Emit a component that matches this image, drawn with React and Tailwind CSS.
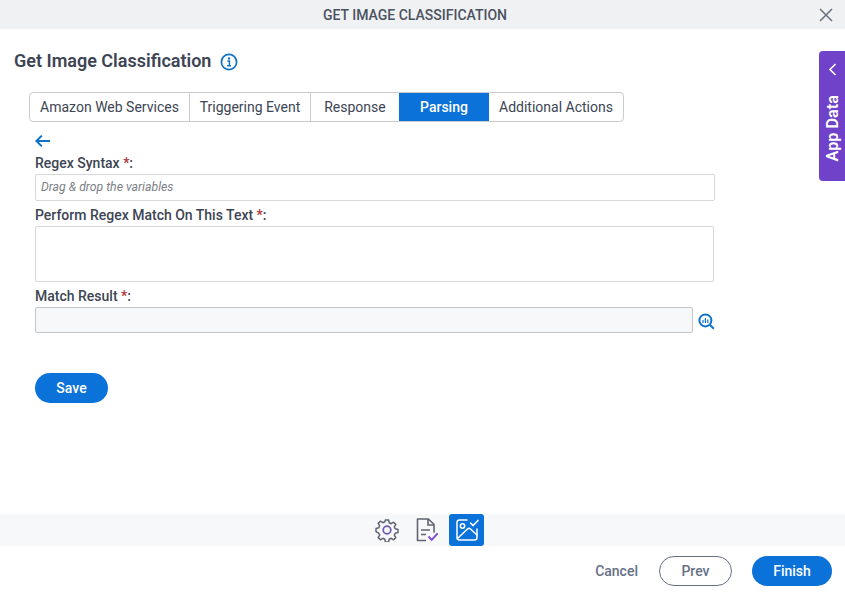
import React from "react";

const Star = () => <span className="text-[#b3343a]">*</span>;

export default function App() {
  return (
    <div className="relative flex h-[593px] w-[845px] flex-col overflow-hidden bg-white font-['Roboto',sans-serif] text-[#3d4554]">
      <header className="relative flex h-[29px] shrink-0 items-center justify-center bg-[#f0f1f3] pt-px text-[14px] font-medium text-[#4a5160]">
        <span className="-ml-[15px]">GET IMAGE CLASSIFICATION</span>
        <button className="absolute right-[12px] top-[8px] text-[#6b7280]">
          <svg width="14" height="14" viewBox="0 0 14 14" fill="none" stroke="currentColor" strokeWidth="1.6" className="block">
            <path d="M1 1l12 12M13 1L1 13" />
          </svg>
        </button>
      </header>

      <main className="min-h-0 flex-1">
        <div className="mt-[22px] flex h-[20px] items-center gap-[9px] pl-[14px]">
          <h1 className="text-[18px] font-semibold leading-[20px] text-[#3d4554]">Get Image Classification</h1>
          <svg width="18" height="18" viewBox="0 0 18 18" fill="none" className="mt-[1px]">
            <circle cx="9" cy="9" r="7.6" stroke="#0f72c9" strokeWidth="1.7" />
            <circle cx="9" cy="5.4" r="1.2" fill="#0f72c9" />
            <path d="M7.4 8h2v4.6M7.2 12.8h3.8" stroke="#0f72c9" strokeWidth="1.5" />
          </svg>
        </div>

        <div className="ml-[29px] mt-[21px] flex h-[30px] w-[595px] overflow-hidden rounded-[4px] border border-[#c9cbcf] text-[14px]">
          <div className="flex w-[160px] items-center justify-center border-r border-[#c9cbcf]">Amazon Web Services</div>
          <div className="flex w-[121px] items-center justify-center border-r border-[#c9cbcf]">Triggering Event</div>
          <div className="flex w-[88px] items-center justify-center">Response</div>
          <div className="-my-px flex w-[90px] items-center justify-center bg-[#0b72d9] font-medium text-white">Parsing</div>
          <div className="flex flex-1 items-center justify-center">Additional Actions</div>
        </div>

        <div className="ml-[35px] w-[680px]">
          <svg width="16" height="14" viewBox="0 0 16 14" fill="none" stroke="#0f72c9" strokeWidth="2" className="mt-[12px] block">
            <path d="M15 7H1.5M6.8 1.6L1.4 7l5.4 5.4" />
          </svg>
          <label className="mt-[7px] block text-[14px] font-medium leading-[16px]">Regex Syntax <Star />:</label>
          <div className="mt-[3px] flex h-[27px] w-[680px] items-center rounded-[2px] border border-[#d6d7da] pb-[1px] pl-[5px] text-[12.25px] italic text-[#7b7f87]">
            Drag &amp; drop the variables
          </div>
          <label className="mt-[6px] block text-[14px] font-medium leading-[16px]">Perform Regex Match On This Text <Star />:</label>
          <div className="mt-[3px] h-[56px] w-[679px] rounded-[2px] border border-[#d6d7da]" />
          <label className="mt-[6px] block text-[14px] font-medium leading-[16px]">Match Result <Star />:</label>
          <div className="mt-[3px] flex items-center gap-[5px]">
            <div className="h-[26px] w-[658px] rounded-[2px] border border-[#c4c5c8] bg-[#f7f8fa]" />
            <svg width="17" height="17" viewBox="0 0 17 17" fill="none" className="mt-[2px]">
              <circle cx="7.4" cy="7.4" r="6" stroke="#0f72c9" strokeWidth="2" />
              <path d="M11.8 11.8l4 4" stroke="#0f72c9" strokeWidth="2" />
              <path d="M5 10V7M7.4 10V5M9.8 10V6.4" stroke="#0f72c9" strokeWidth="1.2" />
            </svg>
          </div>
          <button className="mt-[40px] block h-[30px] w-[73px] rounded-full bg-[#0b72d9] text-[14px] font-medium text-white">Save</button>
        </div>
      </main>

      <div className="flex h-[32px] shrink-0 items-center justify-center bg-[#f7f8fa] pl-[14px]">
        <svg width="24" height="24" viewBox="0 0 24 24" fill="none" stroke="#5f6472" strokeWidth="1.5" strokeLinejoin="round">
          <path d="M10.4 2h3.2l.6 2.8 2 .9 2.4-1.5 2.2 2.2-1.5 2.4.9 2 2.8.6v3.2l-2.8.6-.9 2 1.5 2.4-2.2 2.2-2.4-1.5-2 .9-.6 2.8h-3.2l-.6-2.8-2-.9-2.4 1.5-2.2-2.2 1.5-2.4-.9-2L1 13.6v-3.2l2.8-.6.9-2-1.5-2.4 2.2-2.2 2.4 1.5 2-.9z" />
          <circle cx="12" cy="12" r="3.8" stroke="#6b58b5" strokeWidth="1.7" />
        </svg>
        <svg width="24" height="24" viewBox="0 0 24 24" fill="none" strokeWidth="1.6" className="ml-[16px]">
          <path d="M11 22.5H2.5V1h11l5.5 5.5v8" stroke="#5f6472" strokeLinejoin="round" />
          <path d="M13 1v6h6M6 12h9M6 16.5h5" stroke="#5f6472" />
          <path d="M13.5 18.5l3.2 3.4 6-6.6" stroke="#7c4dd6" strokeWidth="2" />
        </svg>
        <div className="ml-[10px] flex h-[32px] w-[35px] items-center justify-center rounded-[3px] bg-[#0b72d9]">
          <svg width="24" height="24" viewBox="0 0 24 24" fill="none" stroke="white" strokeWidth="1.5" strokeLinejoin="round" strokeLinecap="round">
            <path d="M12 2H4.5A2.5 2.5 0 0 0 2 4.5v15A2.5 2.5 0 0 0 4.5 22h15a2.5 2.5 0 0 0 2.5-2.5V11" />
            <circle cx="7.5" cy="8" r="2.2" />
            <path d="M2.5 20.5L12.5 11c1-.9 2-.9 3 0l6.5 6" />
            <path d="M15.5 5l2.6 2.6L23 2.4" />
          </svg>
        </div>
      </div>

      <footer className="flex h-[47px] shrink-0 items-center justify-end pr-[13px] pt-[3px] text-[14px] font-medium">
        <button className="mr-[21px] text-[#667085]">Cancel</button>
        <button className="mr-[20px] h-[30px] w-[73px] rounded-full border border-[#667085] bg-white text-[#667085]">Prev</button>
        <button className="h-[30px] w-[80px] rounded-full bg-[#0b72d9] text-white">Finish</button>
      </footer>

      <div className="absolute right-0 top-[51px] flex h-[130px] w-[26px] flex-col items-center rounded-l-[4px] bg-[#6f42c9] text-white">
        <svg width="9" height="13" viewBox="0 0 9 13" fill="none" stroke="white" strokeWidth="1.6" className="mt-[12px]">
          <path d="M7.5 1L2 6.5 7.5 12" />
        </svg>
        <span className="ml-[1px] mt-[19px] text-[16.25px] font-semibold leading-[26px] [transform:rotate(180deg)] [writing-mode:vertical-rl]">App Data</span>
      </div>
    </div>
  );
}
